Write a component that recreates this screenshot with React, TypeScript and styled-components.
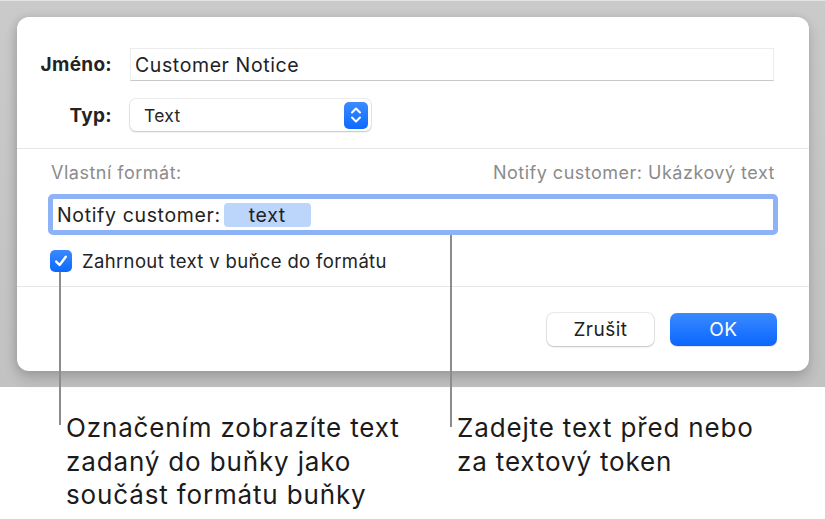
import React from 'react';
import styled, { createGlobalStyle } from 'styled-components';

const GlobalStyle = createGlobalStyle`
  html, body {
    margin: 0;
    padding: 0;
    background: #ffffff;
  }
  body {
    font-family: Inter, "Liberation Sans", Arial, sans-serif;
    -webkit-font-smoothing: antialiased;
  }
`;

const Page = styled.div`
  position: relative;
  width: 825px;
  height: 519px;
  overflow: hidden;
  background: #ffffff;
`;

// gray backdrop with the sheet on it
const Backdrop = styled.div`
  height: 387px;
  box-sizing: border-box;
  padding: 17px 16px 0 17px;
  background: linear-gradient(to bottom, #cacaca 0%, #c2c2c2 100%);
  border-top: 1px solid #e4e4e4;
`;

const Dialog = styled.div`
  width: 792px;
  height: 354px;
  margin-top: -1px;
  box-sizing: border-box;
  background: #ffffff;
  border-radius: 12px;
  box-shadow: 0 8px 14px rgba(0, 0, 0, 0.16), -2px 0 8px rgba(0, 0, 0, 0.1);
  display: flex;
  flex-direction: column;
  overflow: hidden;
`;

const Section = styled.div<{ $pad: string; $divider?: boolean }>`
  padding: ${(p) => p.$pad};
  border-bottom: ${(p) => (p.$divider ? '1px solid #e6e6e6' : 'none')};
`;

const FormGrid = styled.div`
  display: grid;
  grid-template-columns: 95px 1fr;
  column-gap: 18px;
  row-gap: 18px;
  align-items: center;
`;

const Label = styled.div`
  text-align: right;
  font-size: 19px;
  font-weight: 700;
  letter-spacing: 0.3px;
  color: #232323;
`;

const NameField = styled.div`
  height: 33px;
  box-sizing: border-box;
  border: 1px solid #ececec;
  border-bottom: 1px solid #c9c9c9;
  padding-left: 4px;
  display: flex;
  align-items: center;
  font-size: 19.5px;
  letter-spacing: 0.6px;
  color: #222;
`;

const Popup = styled.div`
  width: 241px;
  height: 32px;
  box-sizing: border-box;
  border-radius: 6px;
  background: #fff;
  box-shadow: 0 0 0 1px rgba(0, 0, 0, 0.07), 0 1px 2px rgba(0, 0, 0, 0.18);
  display: flex;
  align-items: center;
  justify-content: space-between;
  padding: 0 3px 0 14px;
  font-size: 17.5px;
  letter-spacing: 0.3px;
  color: #262626;
`;

const Stepper = styled.div`
  width: 24px;
  height: 27px;
  border-radius: 5px;
  background: linear-gradient(to bottom, #3c8bff, #0c6afe);
  display: flex;
  align-items: center;
  justify-content: center;
`;

const FormatHeader = styled.div`
  display: flex;
  justify-content: space-between;
  align-items: center;
  height: 45px;
  box-sizing: border-box;
  padding: 2px 3px 0 3px;
  font-size: 18px;
  letter-spacing: 0.5px;
  color: #8b8b8b;
`;

const TokenField = styled.div`
  height: 41px;
  box-sizing: border-box;
  border: 5px solid #8db3f6;
  border-radius: 5px;
  display: flex;
  align-items: center;
  padding-left: 4px;
  gap: 3px;
  font-size: 19.5px;
  letter-spacing: 0.65px;
  color: #222;
`;

const Token = styled.span`
  width: 87px;
  height: 24px;
  border-radius: 4px;
  background: #bcd6fb;
  display: inline-flex;
  align-items: center;
  justify-content: center;
  font-size: 19.5px;
  color: #222;
`;

const CheckRow = styled.div`
  display: flex;
  align-items: center;
  gap: 10px;
  height: 51px;
  padding-left: 2px;
  font-size: 18.5px;
  letter-spacing: 0.35px;
  color: #232323;
`;

const CheckBox = styled.div`
  width: 22px;
  height: 22px;
  border-radius: 5px;
  background: linear-gradient(to bottom, #3a89ff, #0c69fe);
  display: flex;
  align-items: center;
  justify-content: center;
`;

const ButtonRow = styled.div`
  display: flex;
  justify-content: flex-end;
  gap: 16px;
`;

const Button = styled.div<{ $primary?: boolean }>`
  width: 107px;
  height: 33px;
  box-sizing: border-box;
  border-radius: 7px;
  display: flex;
  align-items: center;
  justify-content: center;
  font-size: 19px;
  letter-spacing: 0.5px;
  color: ${(p) => (p.$primary ? '#ffffff' : '#222222')};
  background: ${(p) => (p.$primary ? 'linear-gradient(to bottom, #3a8aff, #0a66fe)' : '#ffffff')};
  box-shadow: ${(p) =>
    p.$primary
      ? '0 1px 1px rgba(0,0,0,0.12)'
      : '0 0 0 1px rgba(0,0,0,0.08), 0 1px 2px rgba(0,0,0,0.18)'};
`;

const Callouts = styled.div`
  display: flex;
  padding-top: 24px;
`;

const CalloutText = styled.div<{ $left: number; $width: number }>`
  margin-left: ${(p) => p.$left}px;
  width: ${(p) => p.$width}px;
  font-size: 26px;
  line-height: 33.5px;
  letter-spacing: 0.85px;
  color: #1b1b1b;
`;

// leader lines lie over the sheet and the backdrop
const Leader = styled.div<{ $x: number; $top: number; $bottom: number }>`
  position: absolute;
  left: ${(p) => p.$x}px;
  top: ${(p) => p.$top}px;
  width: 2px;
  height: ${(p) => p.$bottom - p.$top}px;
  background: #8c8c8c;
`;

const StepperIcon = () => (
  <svg width="14" height="20" viewBox="0 0 14 20" fill="none">
    <path d="M3 7.5 L7 3.5 L11 7.5" stroke="#fff" strokeWidth="2" strokeLinecap="round" strokeLinejoin="round" />
    <path d="M3 12.5 L7 16.5 L11 12.5" stroke="#fff" strokeWidth="2" strokeLinecap="round" strokeLinejoin="round" />
  </svg>
);

const CheckIcon = () => (
  <svg width="16" height="16" viewBox="0 0 16 16" fill="none">
    <path d="M3.2 8.6 L6.6 12 L12.8 3.8" stroke="#fff" strokeWidth="2.4" strokeLinecap="round" strokeLinejoin="round" />
  </svg>
);

export default function App() {
  return (
    <Page>
      <GlobalStyle />
      <Backdrop>
        <Dialog>
          <Section $pad="31px 35px 17px 0" $divider>
            <FormGrid>
              <Label>Jméno:</Label>
              <NameField>Customer Notice</NameField>
              <Label>Typ:</Label>
              <Popup>
                Text
                <Stepper>
                  <StepperIcon />
                </Stepper>
              </Popup>
            </FormGrid>
          </Section>
          <Section $pad="0 31px 0 31px" $divider>
            <FormatHeader>
              <span>Vlastní formát:</span>
              <span>Notify customer: Ukázkový text</span>
            </FormatHeader>
            <TokenField>
              Notify customer:
              <Token>text</Token>
            </TokenField>
            <CheckRow>
              <CheckBox>
                <CheckIcon />
              </CheckBox>
              Zahrnout text v buňce do formátu
            </CheckRow>
          </Section>
          <Section $pad="26px 32px 0 0">
            <ButtonRow>
              <Button>Zrušit</Button>
              <Button $primary>OK</Button>
            </ButtonRow>
          </Section>
        </Dialog>
      </Backdrop>
      <Callouts>
        <CalloutText $left={66} $width={370}>
          Označením zobrazíte text
          <br />
          zadaný do buňky jako
          <br />
          součást formátu buňky
        </CalloutText>
        <CalloutText $left={21} $width={360}>
          Zadejte text před nebo
          <br />
          za textový token
        </CalloutText>
      </Callouts>
      <Leader $x={59} $top={272} $bottom={425} />
      <Leader $x={450} $top={235} $bottom={427} />
    </Page>
  );
}
